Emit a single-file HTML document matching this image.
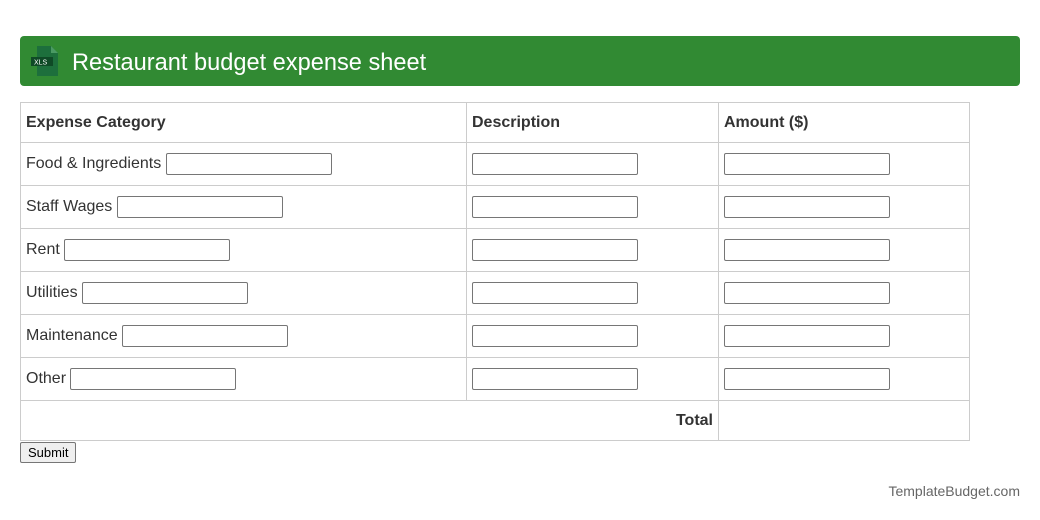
<!DOCTYPE html>
<html><head><style>
body{margin:0;width:1040px;height:520px;background:#fff;font-family:"Liberation Sans",sans-serif;color:#333;position:relative}
.hdr{position:absolute;left:20px;top:36px;width:1000px;height:50px;background:#318a33;border-radius:4px;color:#fff;font-size:23.6px;line-height:50px}
.hdr span{position:absolute;left:52px;top:2px}
table{position:absolute;left:20px;top:102px;border-collapse:collapse;width:950px;font-size:16px}
td,th{border:1px solid #ccc;padding:0 5px;text-align:left}
th{height:39px;font-weight:bold}
td{height:42px}
tr.t td{height:39px}
input{width:160px;height:18px;border:1px solid #767676;border-radius:2px;padding:1px 2px;vertical-align:middle;margin:0}
.c1{width:435px}.c2{width:241px}
button{position:absolute;left:20px;top:442px;height:21px;font-size:13px;font-family:"Liberation Sans",sans-serif;background:#efefef;border:1px solid #767676;border-radius:2px;padding:0 7px}
.ft{position:absolute;right:20px;top:483px;font-size:14px;color:#666}
</style></head><body>
<div class="hdr"><svg style="position:absolute;left:11px;top:10px" width="30" height="30" viewBox="0 0 30 30"><path d="M6 0h14l7 7v23H6z" fill="#1d6f3c"/><path d="M20 0v7h7z" fill="#4a9a63"/><rect x="0" y="11" width="22" height="9" fill="#0f4a26"/><text x="3" y="18.5" font-size="7" fill="#fff" font-family="Liberation Sans">XLS</text></svg><span>Restaurant budget expense sheet</span></div>
<table>
<tr><th class="c1">Expense Category</th><th class="c2">Description</th><th>Amount ($)</th></tr>
<tr><td>Food &amp; Ingredients <input></td><td><input></td><td><input></td></tr>
<tr><td>Staff Wages <input></td><td><input></td><td><input></td></tr>
<tr><td>Rent <input></td><td><input></td><td><input></td></tr>
<tr><td>Utilities <input></td><td><input></td><td><input></td></tr>
<tr><td>Maintenance <input></td><td><input></td><td><input></td></tr>
<tr><td>Other <input></td><td><input></td><td><input></td></tr>
<tr class="t"><td colspan="2" style="text-align:right;font-weight:bold">Total</td><td></td></tr>
</table>
<button>Submit</button>
<div class="ft">TemplateBudget.com</div>
</body></html>
